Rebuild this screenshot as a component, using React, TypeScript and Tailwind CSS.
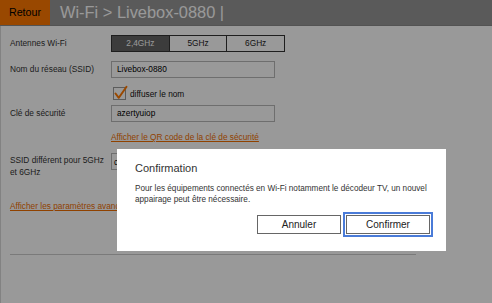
import React from "react";

function CheckIcon() {
  return (
    <svg width="16" height="16" viewBox="0 0 16 16" className="block">
      <rect x="1.5" y="2.5" width="12" height="12" fill="#ffffff" stroke="#9a9a9a" strokeWidth="1" />
      <path d="M3.5 8.5 L6.8 12.8 L14.5 1.8" fill="none" stroke="#ff7900" strokeWidth="2" strokeLinecap="round" strokeLinejoin="round" />
    </svg>
  );
}

export default function App() {
  const font = "font-['Liberation_Sans',Arial,sans-serif]";
  return (
    <div className={`relative w-[492px] h-[303px] overflow-hidden bg-white ${font}`}>
      {/* Header */}
      <div className="flex h-[26px] items-stretch bg-[#969696] border-b border-[#8a8a8a]">
        <div className="flex w-[50px] items-center justify-center bg-[#ff7900] text-[10.7px] text-black">Retour</div>
        <div className="ml-[10px] flex items-center text-[16.4px] leading-none text-white">Wi-Fi &gt; Livebox-0880 |</div>
      </div>

      {/* Body */}
      <div className="h-[277px] border-l border-[#d9d9d9] pl-[9px] text-[8.3px] text-[#333]">
        <div className="grid grid-cols-[101px_1fr] items-center pt-[9px]">
          <div>Antennes Wi-Fi</div>
          <div className="flex h-[17px] w-[174px] border border-[#333]">
            <div className="flex flex-1 items-center justify-center bg-[#646464] text-white">2,4GHz</div>
            <div className="flex flex-1 items-center justify-center border-l border-[#333] bg-white text-[#222]">5GHz</div>
            <div className="flex flex-1 items-center justify-center border-l border-[#333] bg-white text-[#222]">6GHz</div>
          </div>
        </div>

        <div className="mt-[9px] grid grid-cols-[101px_1fr] items-center">
          <div>Nom du réseau (SSID)</div>
          <div className="flex h-[17px] w-[164px] items-center border border-[#b8b8b8] bg-white pl-[5px] text-black">Livebox-0880</div>
        </div>

        <div className="mt-[7px] grid grid-cols-[101px_1fr] items-center">
          <div />
          <div className="flex items-center gap-[2px] pl-[1px]">
            <CheckIcon />
            <span className="pt-[2px] text-[8.3px] text-[#111]">diffuser le nom</span>
          </div>
        </div>

        <div className="mt-[4px] grid grid-cols-[101px_1fr] items-center">
          <div>Clé de sécurité</div>
          <div className="flex h-[17px] w-[164px] items-center border border-[#b8b8b8] bg-white pl-[5px] text-black">azertyuiop</div>
        </div>

        <div className="mt-[9px] grid grid-cols-[101px_1fr] items-center">
          <div />
          <div className="text-[#f16e00] underline">Afficher le QR code de la clé de sécurité</div>
        </div>

        <div className="mt-[10px] grid grid-cols-[101px_1fr] items-start">
          <div className="pt-[2px] leading-[11.6px]">SSID différent pour 5GHz<br />et 6GHz</div>
          <div className="flex h-[17px] w-[164px] items-center border border-[#b8b8b8] bg-white pl-[2px] text-black">cocher</div>
        </div>

        <div className="mt-[21px] text-[#f16e00] underline">Afficher les paramètres avancés</div>

        <div className="mt-[42px] h-px w-[406px] bg-[#cccccc]" />
      </div>

      {/* Overlay */}
      <div className="absolute inset-0 bg-black/40" />

      {/* Dialog */}
      <div className="absolute left-[117px] top-[149px] flex h-[102px] w-[329px] flex-col bg-white pl-[18px] pr-[16px] pt-[13px] text-[#333]">
        <div className="text-[11px] leading-[13px]">Confirmation</div>
        <div className="mt-[9px] text-[8.2px] leading-[10.5px]">
          Pour les équipements connectés en Wi-Fi notamment le décodeur TV, un nouvel<br />appairage peut être nécessaire.
        </div>
        <div className="mt-[10px] flex justify-end gap-[5px]">
          <button className="flex h-[19px] w-[84px] items-center justify-center border border-[#666] bg-white text-[10px] text-[#222]">Annuler</button>
          <button className="flex h-[19px] w-[84px] items-center justify-center border border-[#666] bg-white text-[10px] text-[#222] outline-2 outline-offset-1 outline-[#4a7bd8]">Confirmer</button>
        </div>
      </div>
    </div>
  );
}
